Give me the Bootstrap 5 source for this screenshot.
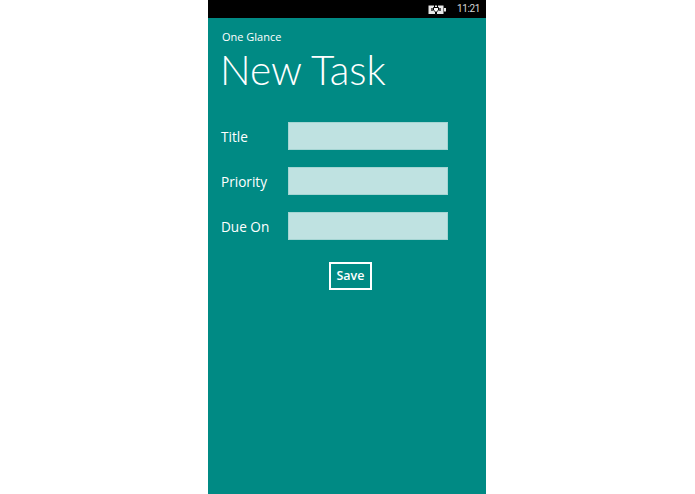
<!DOCTYPE html>
<html lang="en">
<head>
<meta charset="utf-8">
<title>New Task</title>
<link rel="stylesheet" href="https://cdn.jsdelivr.net/npm/bootstrap@5.3.0/dist/css/bootstrap.min.css">
<style>
html,body{height:100%;}
body{background:#fff;font-family:"Open Sans","Noto Sans",sans-serif;overflow:hidden;}
.phone{width:278px;height:494px;background:#008a84;color:#fff;margin-left:208px;}
.statusbar{height:18px;background:#000;color:#d8d8d8;font-family:"Roboto",sans-serif;font-size:10px;letter-spacing:-.4px;line-height:18px;padding-right:6px;gap:10px;}
.statusbar svg{display:block;}
.body-pad{padding:0 38px 0 13px;}
.app-name{font-size:11px;line-height:15px;margin:11px 0 0 1px;}
.page-title{font-family:"Lato",sans-serif;font-size:40.6px;font-weight:300;line-height:52px;margin:0 0 26px -1px;}
.form-line{height:28px;margin-bottom:17px;}
.form-line label{width:67px;font-size:13.6px;margin:0;padding-top:2px;}
.form-control.task-input{flex:1;height:28px;min-height:0;background:#bfe2e1;border:1px solid #a5d5d3;border-radius:0;padding:0 4px;}
.btn.save-btn{background:transparent;color:#fff;border:2px solid #fff;border-radius:0;width:43px;height:28px;padding:0;font-size:12.5px;font-weight:600;line-height:24px;margin:22px 0 0 108px;display:block;}
</style>
</head>
<body>
<div class="phone">
  <div class="statusbar d-flex justify-content-end align-items-center">
    <svg width="19" height="11" viewBox="0 0 19 11" aria-hidden="true">
      <rect x="0.5" y="1.5" width="15" height="8.5" fill="#e8e8e8"/>
      <rect x="16" y="4" width="2" height="3.5" fill="#e8e8e8"/>
      <path d="M3 4h2v3H3zM11 4h2v3h-2z" fill="#555"/>
      <path d="M6.5 0.5v3M9.5 0.5v3M5.5 3.5h5v2.5l-2 2v2.5h-1V8l-2-2z" stroke="#000" stroke-width="1" fill="#fff"/>
    </svg>
    <span>11:21</span>
  </div>
  <div class="body-pad">
    <p class="app-name">One Glance</p>
    <h1 class="page-title">New Task</h1>
    <form>
      <div class="form-line d-flex align-items-center">
        <label for="t">Title</label>
        <input id="t" class="form-control task-input" type="text">
      </div>
      <div class="form-line d-flex align-items-center">
        <label for="p">Priority</label>
        <input id="p" class="form-control task-input" type="text">
      </div>
      <div class="form-line d-flex align-items-center">
        <label for="d">Due On</label>
        <input id="d" class="form-control task-input" type="text">
      </div>
      <button type="button" class="btn save-btn">Save</button>
    </form>
  </div>
</div>
<script src="https://cdn.jsdelivr.net/npm/bootstrap@5.3.0/dist/js/bootstrap.bundle.min.js"></script>
</body>
</html>
